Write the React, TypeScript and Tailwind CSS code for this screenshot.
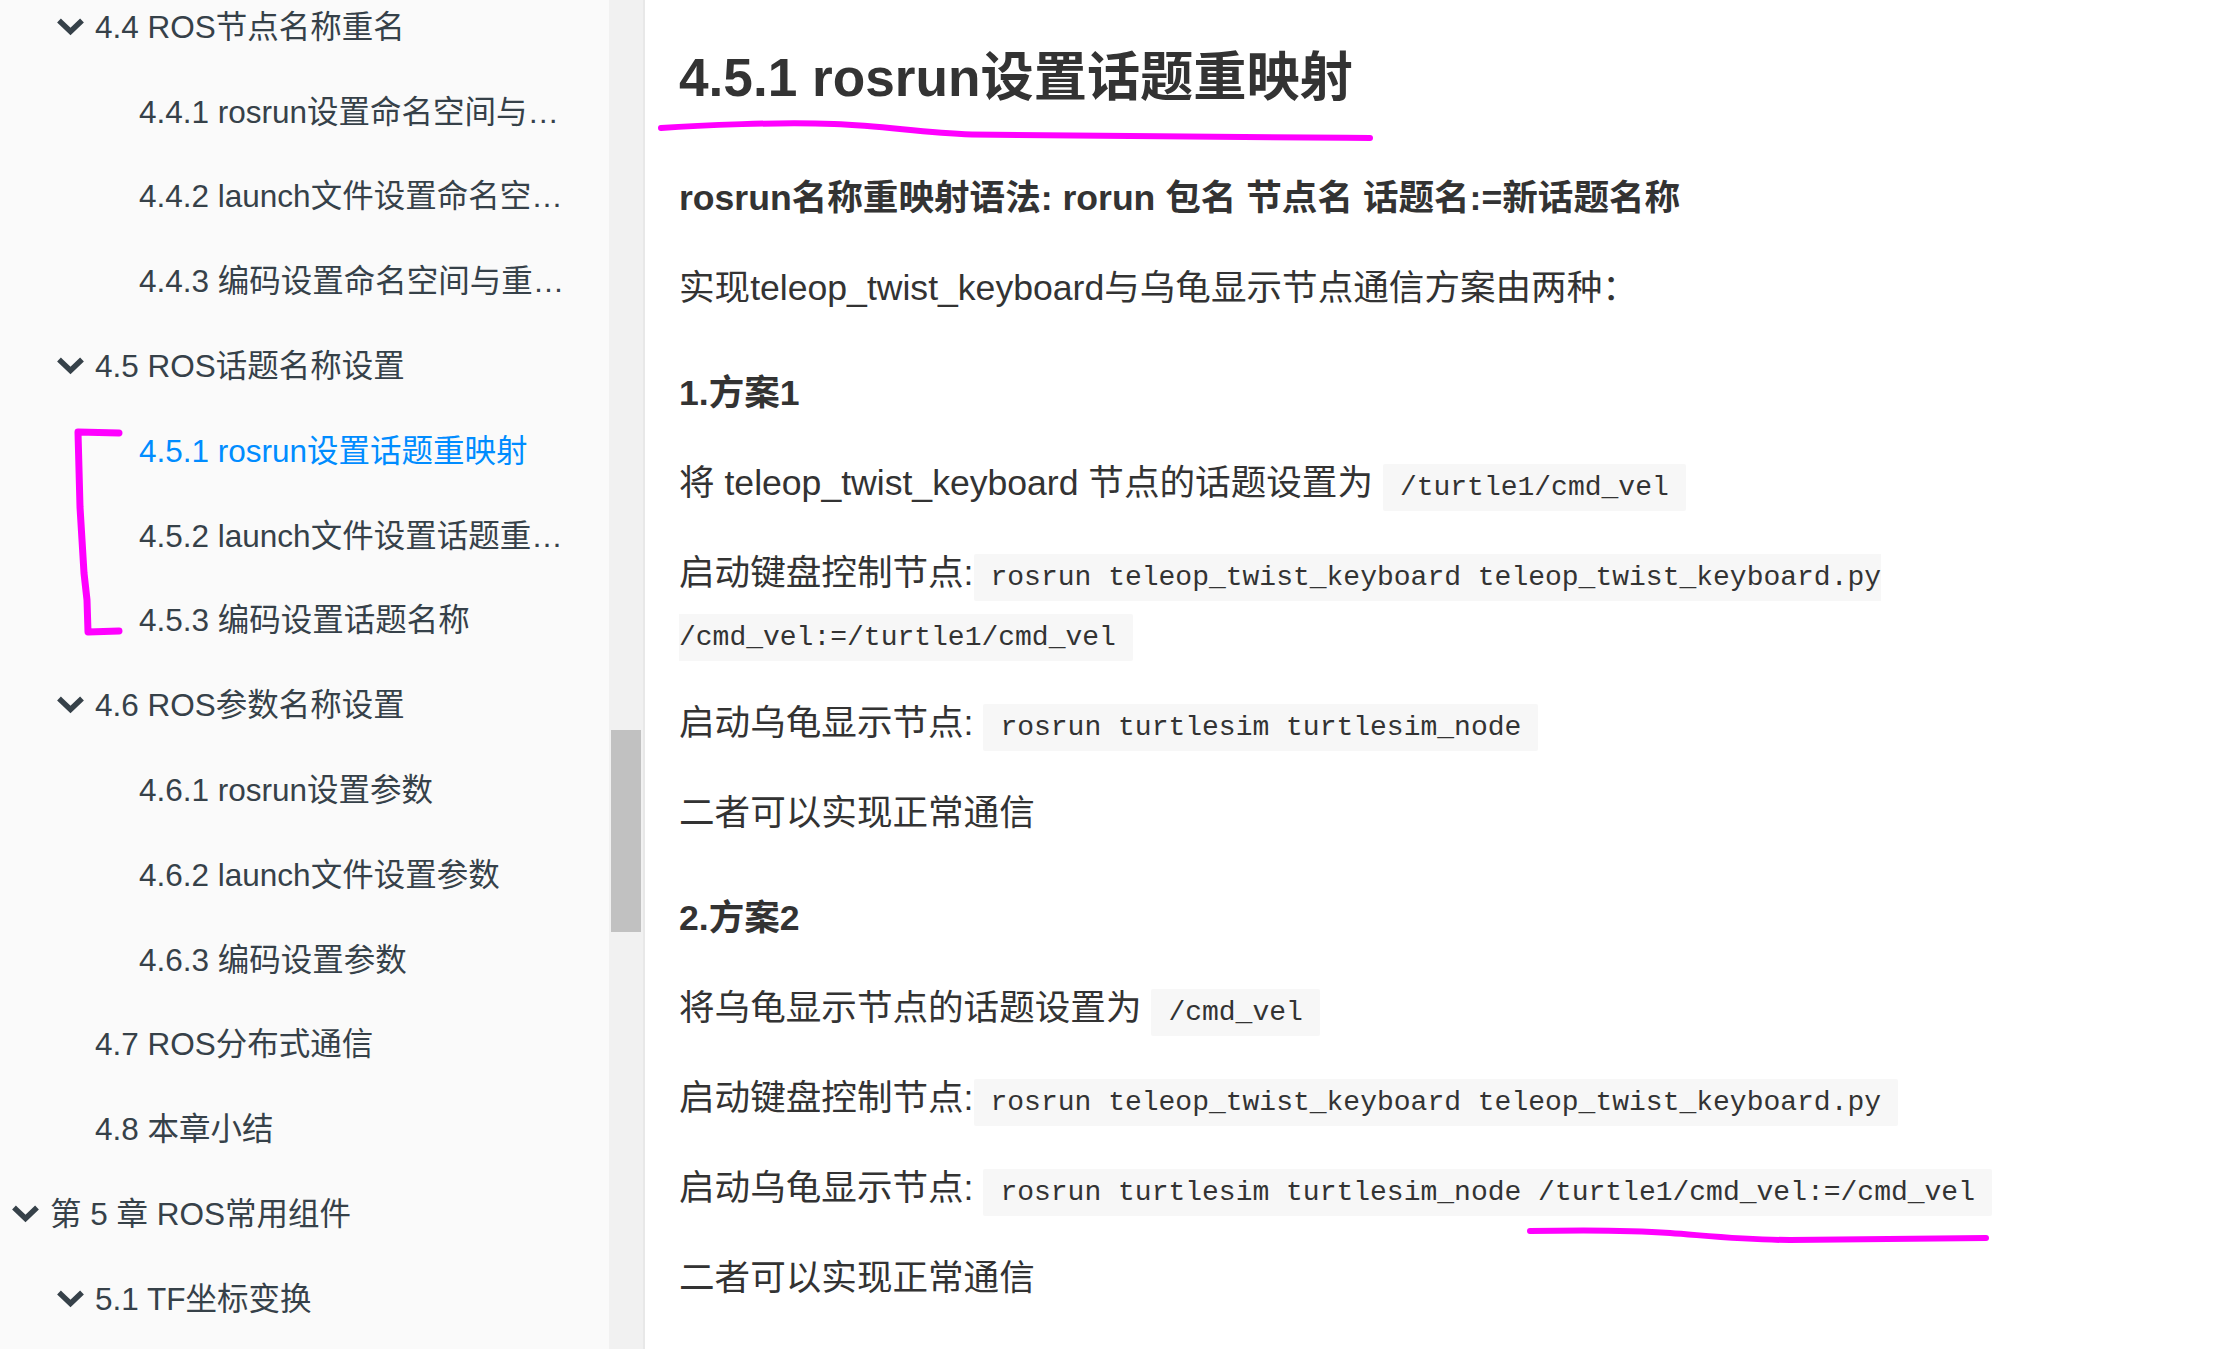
import React from "react";

type Row = { level: 1 | 2 | 3; text: string; chevron?: boolean; active?: boolean };

const rows: Row[] = [
  { level: 2, chevron: true, text: "4.4 ROS节点名称重名" },
  { level: 3, text: "4.4.1 rosrun设置命名空间与重映射" },
  { level: 3, text: "4.4.2 launch文件设置命名空间与重映射" },
  { level: 3, text: "4.4.3 编码设置命名空间与重映射" },
  { level: 2, chevron: true, text: "4.5 ROS话题名称设置" },
  { level: 3, active: true, text: "4.5.1 rosrun设置话题重映射" },
  { level: 3, text: "4.5.2 launch文件设置话题重映射" },
  { level: 3, text: "4.5.3 编码设置话题名称" },
  { level: 2, chevron: true, text: "4.6 ROS参数名称设置" },
  { level: 3, text: "4.6.1 rosrun设置参数" },
  { level: 3, text: "4.6.2 launch文件设置参数" },
  { level: 3, text: "4.6.3 编码设置参数" },
  { level: 2, text: "4.7 ROS分布式通信" },
  { level: 2, text: "4.8 本章小结" },
  { level: 1, chevron: true, text: "第 5 章 ROS常用组件" },
  { level: 2, chevron: true, text: "5.1 TF坐标变换" },
];

function Chevron() {
  return (
    <svg width="27" height="18" viewBox="0 0 27 18" className="shrink-0">
      <polyline
        points="4,4.5 13.5,13.5 23,4.5"
        fill="none"
        stroke="#364149"
        strokeWidth="5.5"
        strokeLinecap="square"
        strokeLinejoin="miter"
      />
    </svg>
  );
}

function SideRow({ row }: { row: Row }) {
  const pad =
    row.level === 1 ? "pl-[12px]" : row.level === 2 ? "pl-[57px]" : "pl-[139px]";
  return (
    <li className={`flex h-[84.8px] items-center pr-[34px] ${pad}`}>
      {row.level !== 3 && (
        <span className="mr-[11px] flex w-[27px] shrink-0 items-center justify-center">
          {row.chevron ? <Chevron /> : null}
        </span>
      )}
      <span
        className={`min-w-0 truncate text-[31.5px] leading-[40px] ${
          row.active ? "text-[#008cff]" : "text-[#364149]"
        }`}
      >
        {row.text}
      </span>
    </li>
  );
}

function Code({ children }: { children: React.ReactNode }) {
  return (
    <code className="rounded-[2px] bg-[#f7f7f7] px-[17px] py-[8px] font-['Liberation_Mono',monospace] text-[28px] leading-[32px] text-[#333]">
      {children}
    </code>
  );
}

function P({ children, bold }: { children: React.ReactNode; bold?: boolean }) {
  return (
    <p className={`mb-[30px] text-[35.6px] leading-[60px] text-[#333] ${bold ? "font-bold" : ""}`}>
      {children}
    </p>
  );
}

function H4({ children }: { children: React.ReactNode }) {
  return (
    <h4 className="mb-[30px] mt-[45px] text-[35.6px] font-bold leading-[60px] text-[#333]">
      {children}
    </h4>
  );
}

export default function App() {
  return (
    <div className="relative flex h-[1349px] w-[2217px] overflow-hidden bg-white font-['Liberation_Sans','Noto_Sans_CJK_SC',sans-serif]">
      <aside className="w-[609px] shrink-0 overflow-hidden bg-[#fafafa]">
        <ul className="-mt-[15.5px]">
          {rows.map((r, i) => (
            <SideRow key={i} row={r} />
          ))}
        </ul>
      </aside>
      <div className="flex w-[36px] shrink-0 flex-col border-r-2 border-[#e8e8e8] bg-[#f1f1f1] px-[2px] pt-[730px]">
        <div className="h-[202px] w-[30px] bg-[#c1c1c1]" />
      </div>
      <main className="min-w-0 flex-1 pl-[34px] pr-[60px] pt-[42px]">
        <h3 className="mb-[54px] text-[53.2px] font-bold leading-[72px] text-[#333]">
          4.5.1 rosrun设置话题重映射
        </h3>
        <P bold>rosrun名称重映射语法: rorun 包名 节点名 话题名:=新话题名称</P>
        <P>实现teleop_twist_keyboard与乌龟显示节点通信方案由两种：</P>
        <H4>1.方案1</H4>
        <P>
          将 teleop_twist_keyboard 节点的话题设置为 <Code>/turtle1/cmd_vel</Code>
        </P>
        <P>
          启动键盘控制节点:<Code>rosrun teleop_twist_keyboard teleop_twist_keyboard.py /cmd_vel:=/turtle1/cmd_vel</Code>
        </P>
        <P>
          启动乌龟显示节点: <Code>rosrun turtlesim turtlesim_node</Code>
        </P>
        <P>二者可以实现正常通信</P>
        <H4>2.方案2</H4>
        <P>
          将乌龟显示节点的话题设置为 <Code>/cmd_vel</Code>
        </P>
        <P>
          启动键盘控制节点:<Code>rosrun teleop_twist_keyboard teleop_twist_keyboard.py</Code>
        </P>
        <P>
          启动乌龟显示节点: <Code>rosrun turtlesim turtlesim_node /turtle1/cmd_vel:=/cmd_vel</Code>
        </P>
        <P>二者可以实现正常通信</P>
      </main>
      <svg
        className="pointer-events-none absolute left-0 top-0"
        width="2217"
        height="1349"
        viewBox="0 0 2217 1349"
      >
        <path
          d="M661 128 C700 125, 780 122, 834 124 S920 133, 972 134.5 S1200 137, 1370 138"
          fill="none"
          stroke="#ff00ff"
          strokeWidth="6"
          strokeLinecap="round"
          strokeLinejoin="round"
        />
        <polyline
          points="119,433 78,432 80,507 84,573 87,600 88,632 119,631"
          fill="none"
          stroke="#ff00ff"
          strokeWidth="7"
          strokeLinecap="round"
          strokeLinejoin="round"
        />
        <path
          d="M1530 1231 C1580 1230, 1630 1230, 1670 1233 S1745 1240, 1790 1240 L1986 1238"
          fill="none"
          stroke="#ff00ff"
          strokeWidth="6"
          strokeLinecap="round"
          strokeLinejoin="round"
        />
      </svg>
    </div>
  );
}
